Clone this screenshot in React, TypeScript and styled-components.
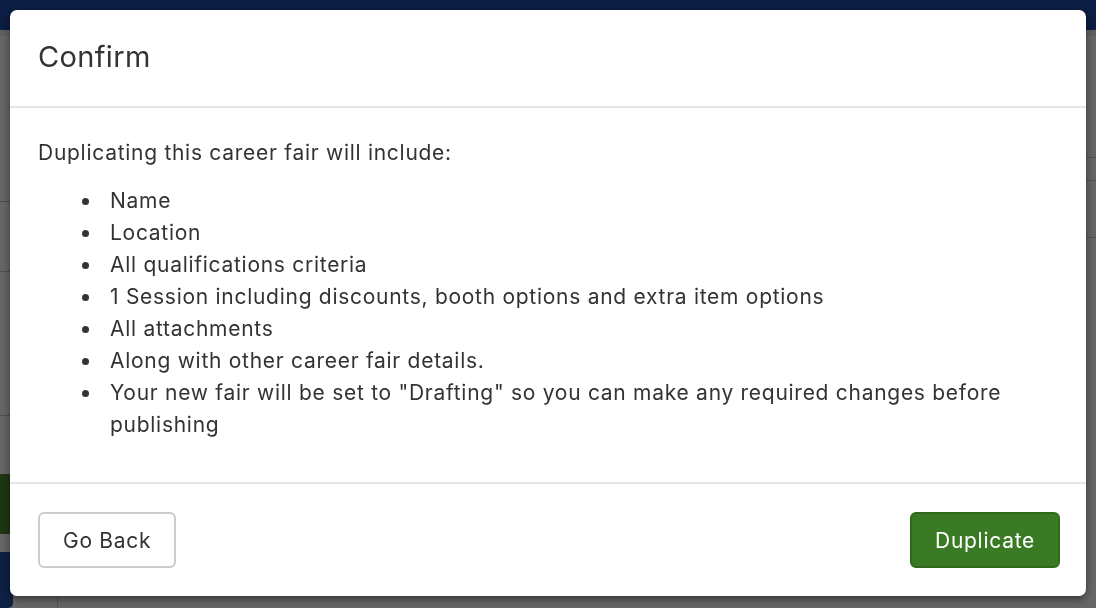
import React from "react";
import styled, { createGlobalStyle } from "styled-components";

const Global = createGlobalStyle`
  html, body { margin: 0; padding: 0; }
  body {
    width: 1096px;
    height: 608px;
    overflow: hidden;
    font-family: Inter, "Liberation Sans", sans-serif;
    background: #fff;
  }
  * { box-sizing: border-box; }
`;

const Page = styled.div`
  width: 1096px;
  height: 608px;
  display: flex;
  flex-direction: column;
  background: #fff;
`;

const TopBar = styled.div`
  height: 30px;
  flex: none;
  background: #1f4aa8;
  border-bottom: 6px solid #eeeeee;
  box-sizing: content-box;
`;

const PageBody = styled.div`
  flex: 1;
  display: grid;
  grid-template-columns: 58px 1fr;
`;

const Side = styled.div`
  display: flex;
  flex-direction: column;
  border-right: 1px solid #d4d4d4;
`;

const SideRow = styled.div<{ $h: number }>`
  height: ${(p) => p.$h}px;
  flex: none;
  border-bottom: 1px solid #c0c0c0;
`;

const SideGreen = styled.div`
  height: 60px;
  flex: none;
  margin-top: 58px;
  background: #4a8a2c;
`;

const SideBlue = styled.div`
  flex: 1;
  width: 13px;
  margin-top: 18px;
  background: #2452a8;
  border-radius: 0 0 5px 0;
`;

const Main = styled.div`
  display: flex;
  flex-direction: column;
  padding-top: 121px;
  align-items: flex-end;
`;

const MainTable = styled.div`
  width: 60px;
  border-top: 1px solid #d0d0d0;
  display: flex;
  flex-direction: column;
`;

const MainRow = styled.div<{ $h: number }>`
  height: ${(p) => p.$h}px;
  border-bottom: 1px solid #d0d0d0;
  font-size: 21px;
  color: #333;
  display: flex;
  align-items: center;
  padding-left: 4px;
`;

const MainText = styled.div`
  margin-top: 140px;
  width: 60px;
  font-size: 21px;
  line-height: 31px;
  color: #333;
  padding-left: 2px;
`;

const Overlay = styled.div`
  position: fixed;
  inset: 0;
  background: rgba(0, 0, 0, 0.6);
  display: flex;
  align-items: flex-start;
  justify-content: center;
  padding-top: 10px;
`;

const Modal = styled.div`
  width: 1076px;
  height: 586px;
  background: #fff;
  border-radius: 7px;
  box-shadow: 0 3px 9px rgba(0, 0, 0, 0.5);
  display: flex;
  flex-direction: column;
  color: #333;
  letter-spacing: 0.72px;
`;

const Header = styled.div`
  height: 98px;
  flex: none;
  padding: 0 28px;
  display: flex;
  align-items: center;
  border-bottom: 2px solid #e5e5e5;
`;

const Title = styled.h4`
  margin: 0 0 2px;
  font-size: 29px;
  font-weight: 400;
  line-height: 1.2;
  letter-spacing: 0.35px;
  color: #333;
`;

const Body = styled.div`
  flex: 1;
  padding: 29px 28px 0;
  font-size: 21px;
  line-height: 32px;
`;

const Para = styled.p`
  margin: 0 0 16px;
`;

const List = styled.ul`
  margin: 0;
  padding-left: 72px;
  list-style: none;
`;

const Item = styled.li`
  position: relative;

  &::before {
    content: "";
    position: absolute;
    left: -28px;
    top: 13px;
    width: 7px;
    height: 7px;
    border-radius: 50%;
    background: #333;
  }
`;

const Footer = styled.div`
  flex: none;
  border-top: 2px solid #e5e5e5;
  padding: 28px 26px 28px 28px;
  display: flex;
  justify-content: space-between;
  align-items: center;
`;

const Button = styled.button<{ $primary?: boolean }>`
  height: 56px;
  padding: 0 23px;
  font-family: inherit;
  font-size: 21px;
  letter-spacing: 0.72px;
  border-radius: 6px;
  cursor: pointer;
  border: 2px solid ${(p) => (p.$primary ? "#2e6a1a" : "#cccccc")};
  background: ${(p) => (p.$primary ? "#3b7a24" : "#ffffff")};
  color: ${(p) => (p.$primary ? "#ffffff" : "#333333")};
`;

const items = [
  "Name",
  "Location",
  "All qualifications criteria",
  "1 Session including discounts, booth options and extra item options",
  "All attachments",
  "Along with other career fair details.",
  'Your new fair will be set to "Drafting" so you can make any required changes before publishing',
];

export default function App() {
  return (
    <>
      <Global />
      <Page>
        <TopBar />
        <PageBody>
          <Side>
            <SideRow $h={166} />
            <SideRow $h={70} />
            <SideRow $h={144} />
            <SideGreen />
            <SideBlue />
          </Side>
          <Main>
            <MainTable>
              <MainRow $h={23} />
              <MainRow $h={57}>a</MainRow>
            </MainTable>
            <MainText>
              s<br />e
            </MainText>
          </Main>
        </PageBody>
      </Page>
      <Overlay>
        <Modal role="dialog" aria-labelledby="confirm-title">
          <Header>
            <Title id="confirm-title">Confirm</Title>
          </Header>
          <Body>
            <Para>Duplicating this career fair will include:</Para>
            <List>
              {items.map((t) => (
                <Item key={t}>{t}</Item>
              ))}
            </List>
          </Body>
          <Footer>
            <Button>Go Back</Button>
            <Button $primary>Duplicate</Button>
          </Footer>
        </Modal>
      </Overlay>
    </>
  );
}
